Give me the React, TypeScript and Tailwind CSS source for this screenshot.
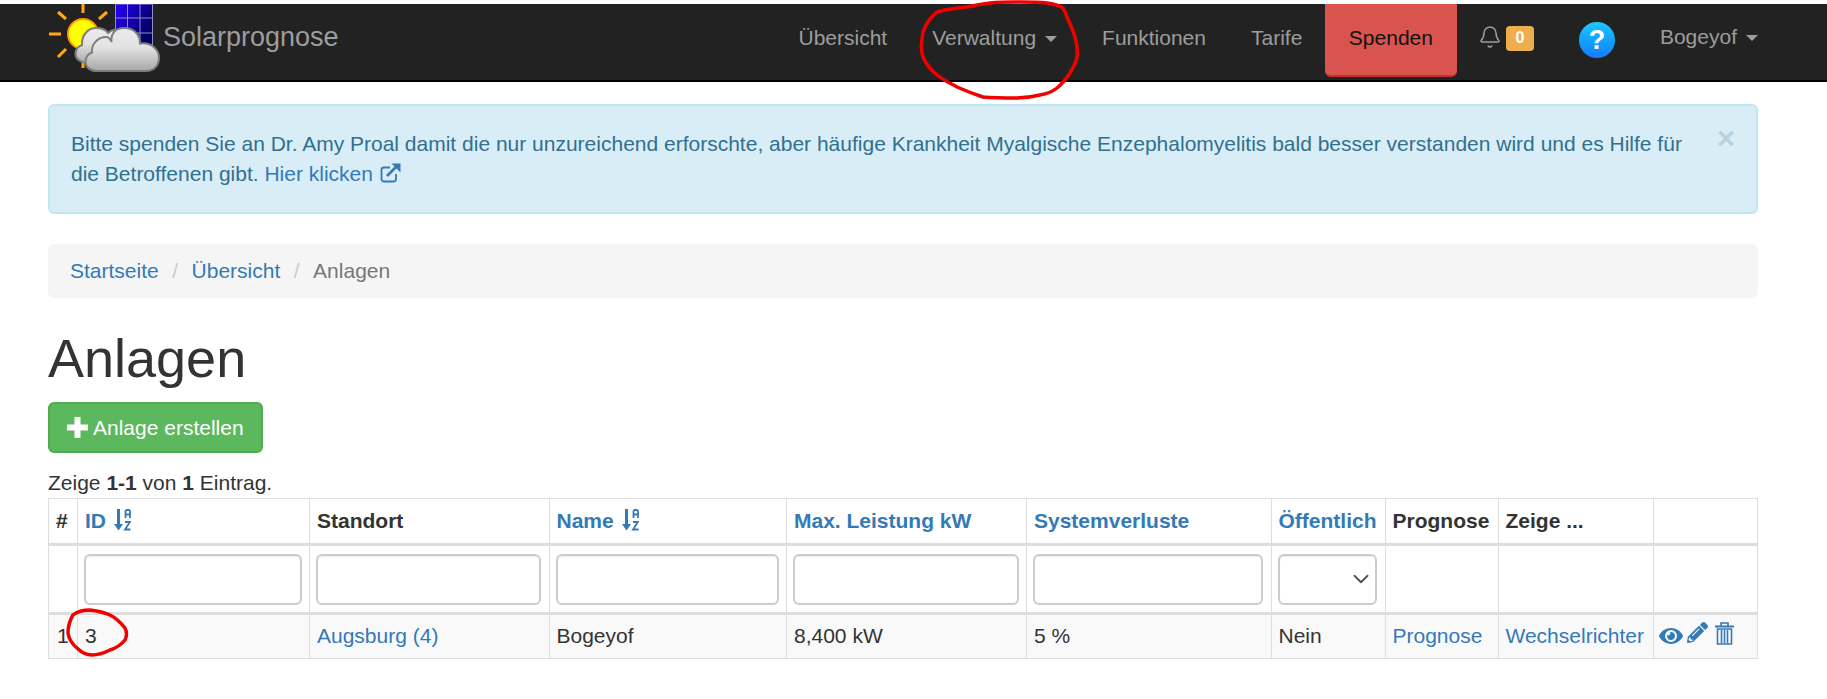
import { Bell, ChevronDown } from "lucide-react";
import { FaEye, FaPencilAlt } from "react-icons/fa";

function Logo() {
  return (
    <svg width="112" height="68" viewBox="48 4 112 68" className="shrink-0">
      <defs>
        <linearGradient id="panel" x1="0" y1="0" x2="1" y2="0.6">
          <stop offset="0" stopColor="#2a00ff" />
          <stop offset="1" stopColor="#00005a" />
        </linearGradient>
        <linearGradient id="cloud" x1="0" y1="0" x2="0" y2="1">
          <stop offset="0" stopColor="#ececec" />
          <stop offset="0.45" stopColor="#e2e2e2" />
          <stop offset="1" stopColor="#a8a8a8" />
        </linearGradient>
        <radialGradient id="sun" cx="0.4" cy="0.4" r="0.7">
          <stop offset="0" stopColor="#ffff00" />
          <stop offset="0.85" stopColor="#ffff00" />
          <stop offset="1" stopColor="#ffd000" />
        </radialGradient>
      </defs>
      <rect x="115.5" y="4" width="37" height="41" fill="url(#panel)" stroke="#8f8fc4" strokeWidth="1" />
      <path d="M127.5 4V45M140 4V45M115.5 18H152.5M115.5 33H152.5" stroke="#8f8fc4" strokeWidth="1" fill="none" />
      <g stroke="#ffa812" strokeWidth="3" fill="none">
        <path d="M49 34H61M83 4V13M58 12L66 19M58 57L66 49M99 19L107 12M83 62V68" />
      </g>
      <circle cx="83" cy="34" r="15" fill="url(#sun)" stroke="#ff9a00" strokeWidth="2" />
      <path
        d="M88 63C81 63 75.500 59 75.500 54C75.500 49.500 78 46.500 82 45C81.500 35 88 28 96 28C102 28 106 30 108 33C112 29 118 29 122 31L125 62Z"
        fill="url(#cloud)"
        stroke="#7d7d7d"
        strokeWidth="2"
      />
      <path
        d="M97 71C90 71 85.500 67 85.500 62C85.500 57 88 54 92 52.500C91 44 98 37 106 37C108 37 110 38 111.500 42C110.500 33 116 28 124 28C134 28 140 34 140 43.500C152 42 159 50 159 58C159 66 153 71 146 71Z"
        fill="url(#cloud)"
        stroke="#7d7d7d"
        strokeWidth="2"
      />
    </svg>
  );
}

function Caret() {
  return (
    <span className="inline-block w-0 h-0 ml-[9px] align-middle border-x-[6px] border-x-transparent border-t-[6px] border-t-[#9d9d9d]" />
  );
}

function NavLink({ children }: { children: React.ReactNode }) {
  return <a className="block px-[22.5px] pt-[19px] leading-[30px] text-[#9d9d9d] whitespace-nowrap">{children}</a>;
}

function Trash() {
  return (
    <svg width="19" height="23" viewBox="0 0 19 23" fill="none" stroke="#337ab7" strokeWidth="1.6">
      <path d="M0 4.500H19" strokeWidth="2" />
      <path d="M6 4V1H13V4" />
      <path d="M2.500 7V22H16.500V7Z" />
      <path d="M6.500 8V21M9.500 8V21M12.500 8V21" />
    </svg>
  );
}

function ExternalIcon() {
  return (
    <svg width="21" height="20" viewBox="0 0 21 20" fill="none" className="inline-block align-[-2px] ml-[1px]">
      <path d="M16 11V16C16 17.500 15 18.500 13.500 18.500H4C2.500 18.500 1.500 17.500 1.500 16V7C1.500 5.500 2.500 4.500 4 4.500H10" stroke="#337ab7" strokeWidth="1.800" />
      <path d="M7 13L17 3" stroke="#337ab7" strokeWidth="2.600" />
      <path d="M11.500 0.500H20.500V9.500Z" fill="#337ab7" />
    </svg>
  );
}

const widths = ["w-[29px]", "w-[232px]", "w-[239.5px]", "w-[237.5px]", "w-[240px]", "w-[244.5px]", "w-[114px]", "w-[113px]", "w-[155.5px]", "w-[103.5px]"];
const cell = "border border-[#ddd] pr-[7.5px] align-top leading-[30px]";
const head = `${cell} pl-[7px] border-b-[3px] py-[7px] font-bold text-left whitespace-nowrap`;
const filter = `${cell} border-b-[3px] py-[7.5px] pl-[6px]`;
const bodyBase = `${cell} pt-[6px] pb-[7px]`;
const body = `${bodyBase} pl-[7px]`;
const input =
  "block w-full h-[51px] rounded-[6px] border-2 border-[#ccc] bg-white shadow-[inset_0_1px_1px_rgba(0,0,0,0.075)]";

function Sort() {
  return (
    <svg width="17" height="22" viewBox="0 0 17 22" fill="none" stroke="#337ab7" className="inline-block ml-[8px] align-[-3px]">
      <path d="M4.500 0V17" strokeWidth="3" />
      <path d="M0 15H9L4.500 21.500Z" fill="#337ab7" stroke="none" />
      <path d="M11.500 9V2.500Q11.500 1 13 1H14.500Q16 1 16 2.500V9M11.500 5.500H16" strokeWidth="1.800" />
      <path d="M11 13H16L11 20.500H16.500" strokeWidth="1.800" />
    </svg>
  );
}

export default function App() {
  return (
    <div className="relative w-[1827px] h-[699px] overflow-hidden bg-white pt-[4px] font-['Liberation_Sans',Arial,sans-serif] text-[21px] leading-[30px] text-[#333]">
      <nav className="flex justify-between h-[78px] bg-[#222] border-b-2 border-black pl-[48px] pr-[69px]">
        <div className="flex">
          <Logo />
          <a className="ml-[3px] pt-[18px] text-[27px] leading-[30px] text-[#9d9d9d]">Solarprognose</a>
        </div>
        <div className="flex">
          <NavLink>Übersicht</NavLink>
          <NavLink>
            Verwaltung
            <Caret />
          </NavLink>
          <NavLink>Funktionen</NavLink>
          <NavLink>Tarife</NavLink>
          <a className="block h-[73px] px-[24px] pt-[19px] leading-[30px] text-[#111] bg-[#d9534f] border-b-2 border-[#c9302c] rounded-b-[6px]">
            Spenden
          </a>
          <div className="flex items-start ml-[21px] pt-[22px]">
            <Bell size={24} strokeWidth={1.5} className="text-[#9d9d9d] mt-[-1px]" />
            <span className="ml-[4px] w-[28px] h-[25px] rounded-[4px] bg-[#f0ad4e] text-white text-[16px] font-bold leading-[24px] text-center">
              0
            </span>
          </div>
          <div className="ml-[45px] mt-[18px] w-[36px] h-[36px] rounded-full bg-gradient-to-b from-[#20c8ff] to-[#1a7aff] text-white text-[27px] font-bold leading-[37px] text-center">
            ?
          </div>
          <a className="block ml-[45px] pt-[18px] leading-[30px] text-[#9d9d9d] whitespace-nowrap">
            Bogeyof
            <Caret />
          </a>
        </div>
      </nav>

      <main className="pl-[48px]">
        <div className="mt-[22px] h-[110px] w-[1710px] flex justify-between rounded-[6px] border-2 border-[#bce8f1] bg-[#d9edf7] pl-[21px] pr-[21px] pt-[23px] text-[#31708f]">
          <p className="w-[1625px]">
            Bitte spenden Sie an Dr. Amy Proal damit die nur unzureichend erforschte, aber häufige Krankheit Myalgische Enzephalomyelitis bald besser verstanden wird und es Hilfe für die Betroffenen gibt.{" "}
            <a className="text-[#337ab7]">
              Hier klicken <ExternalIcon />
            </a>
          </p>
          <span className="text-[31px] font-bold leading-[20px] text-[#b8d2e0]">×</span>
        </div>

        <div className="mt-[30px] h-[54px] w-[1710px] flex rounded-[6px] bg-[#f5f5f5] px-[22px] py-[12px]">
          <a className="text-[#337ab7]">Startseite</a>
          <span className="mx-[13.5px] text-[#ccc]">/</span>
          <a className="text-[#337ab7]">Übersicht</a>
          <span className="mx-[13.5px] text-[#ccc]">/</span>
          <span className="text-[#777]">Anlagen</span>
        </div>

        <h1 className="mt-[30px] text-[54px] leading-[60px] font-normal">Anlagen</h1>

        <button className="flex items-center mt-[14px] h-[51px] w-[215px] rounded-[6px] border-2 border-[#4cae4c] bg-[#5cb85c] pl-[17px] text-white">
          <svg width="21" height="21" viewBox="0 0 21 21" fill="white" className="mr-[5px]">
            <path d="M7.500 0H13.500V7.500H21V13.500H13.500V21H7.500V13.500H0V7.500H7.500Z" />
          </svg>
          Anlage erstellen
        </button>

        <p className="mt-[15px]">
          Zeige <b>1-1</b> von <b>1</b> Eintrag.
        </p>

        <table className="w-[1709px] table-fixed border-collapse">
          <colgroup>
            {widths.map((w) => (
              <col key={w} className={w} />
            ))}
          </colgroup>
          <thead>
            <tr>
              <th className={head}>#</th>
              <th className={`${head} text-[#337ab7]`}>
                ID
                <Sort />
              </th>
              <th className={head}>Standort</th>
              <th className={`${head} text-[#337ab7]`}>
                Name
                <Sort />
              </th>
              <th className={`${head} text-[#337ab7]`}>Max. Leistung kW</th>
              <th className={`${head} text-[#337ab7]`}>Systemverluste</th>
              <th className={`${head} text-[#337ab7]`}>Öffentlich</th>
              <th className={head}>Prognose</th>
              <th className={head}>Zeige ...</th>
              <th className={head}></th>
            </tr>
            <tr>
              <td className={filter}></td>
              <td className={filter}><input className={input} /></td>
              <td className={filter}><input className={input} /></td>
              <td className={filter}><input className={input} /></td>
              <td className={filter}><input className={input} /></td>
              <td className={filter}><input className={input} /></td>
              <td className={filter}>
                <div className="relative">
                  <select className={`${input} appearance-none`}>
                    <option></option>
                  </select>
                  <ChevronDown size={26} strokeWidth={1.8} className="absolute right-[3px] top-[12px] text-[#555] pointer-events-none" />
                </div>
              </td>
              <td className={filter}></td>
              <td className={filter}></td>
              <td className={filter}></td>
            </tr>
          </thead>
          <tbody className="bg-[#f9f9f9]">
            <tr>
              <td className={`${bodyBase} pl-[8px]`}>1</td>
              <td className={body}>3</td>
              <td className={body}><a className="text-[#337ab7]">Augsburg (4)</a></td>
              <td className={body}>Bogeyof</td>
              <td className={body}>8,400 kW</td>
              <td className={body}>5 %</td>
              <td className={body}>Nein</td>
              <td className={body}><a className="text-[#337ab7]">Prognose</a></td>
              <td className={`${body} whitespace-nowrap`}><a className="text-[#337ab7]">Wechselrichter</a></td>
              <td className={`${bodyBase} pl-[5px]`}>
                <div className="flex items-start gap-[4px] text-[#337ab7] mt-[1px]">
                  <FaEye size={24} className="mt-[2px]" />
                  <FaPencilAlt size={21} />
                  <span className="ml-[3px]"><Trash /></span>
                </div>
              </td>
            </tr>
          </tbody>
        </table>
      </main>

      <svg width="1827" height="699" className="absolute inset-0 pointer-events-none" fill="none" stroke="#f20000" strokeWidth="3.500" strokeLinecap="round" strokeLinejoin="round">
        <path d="M937 12C947 9 957 8 967 7C975 5 982 4 990 3C1000 2 1010 2 1020 2C1029 2 1038 2 1047 3C1053 4 1059 5 1063 8C1065 11 1066 14 1067 17C1070 24 1073 30 1075 37C1077 44 1078 50 1077 57C1076 63 1073 68 1070 73C1066 79 1062 84 1057 88C1052 92 1046 94 1040 95C1032 97 1025 98 1017 98C1005 98 994 98 983 97C974 94 966 91 957 87C950 83 943 80 937 75C931 70 926 64 923 57C921 51 921 46 922 40C922 35 923 31 925 27C928 21 932 16 937 12Z" />
        <path d="M73 615C78 611 84 610 90 610C97 611 104 612 110 615C116 618 121 623 125 628C127 632 127 636 125 640C121 645 116 648 110 650C104 653 98 655 92 655C86 655 81 652 77 648C72 644 69 639 68 633C68 627 70 620 73 615Z" />
      </svg>
    </div>
  );
}
